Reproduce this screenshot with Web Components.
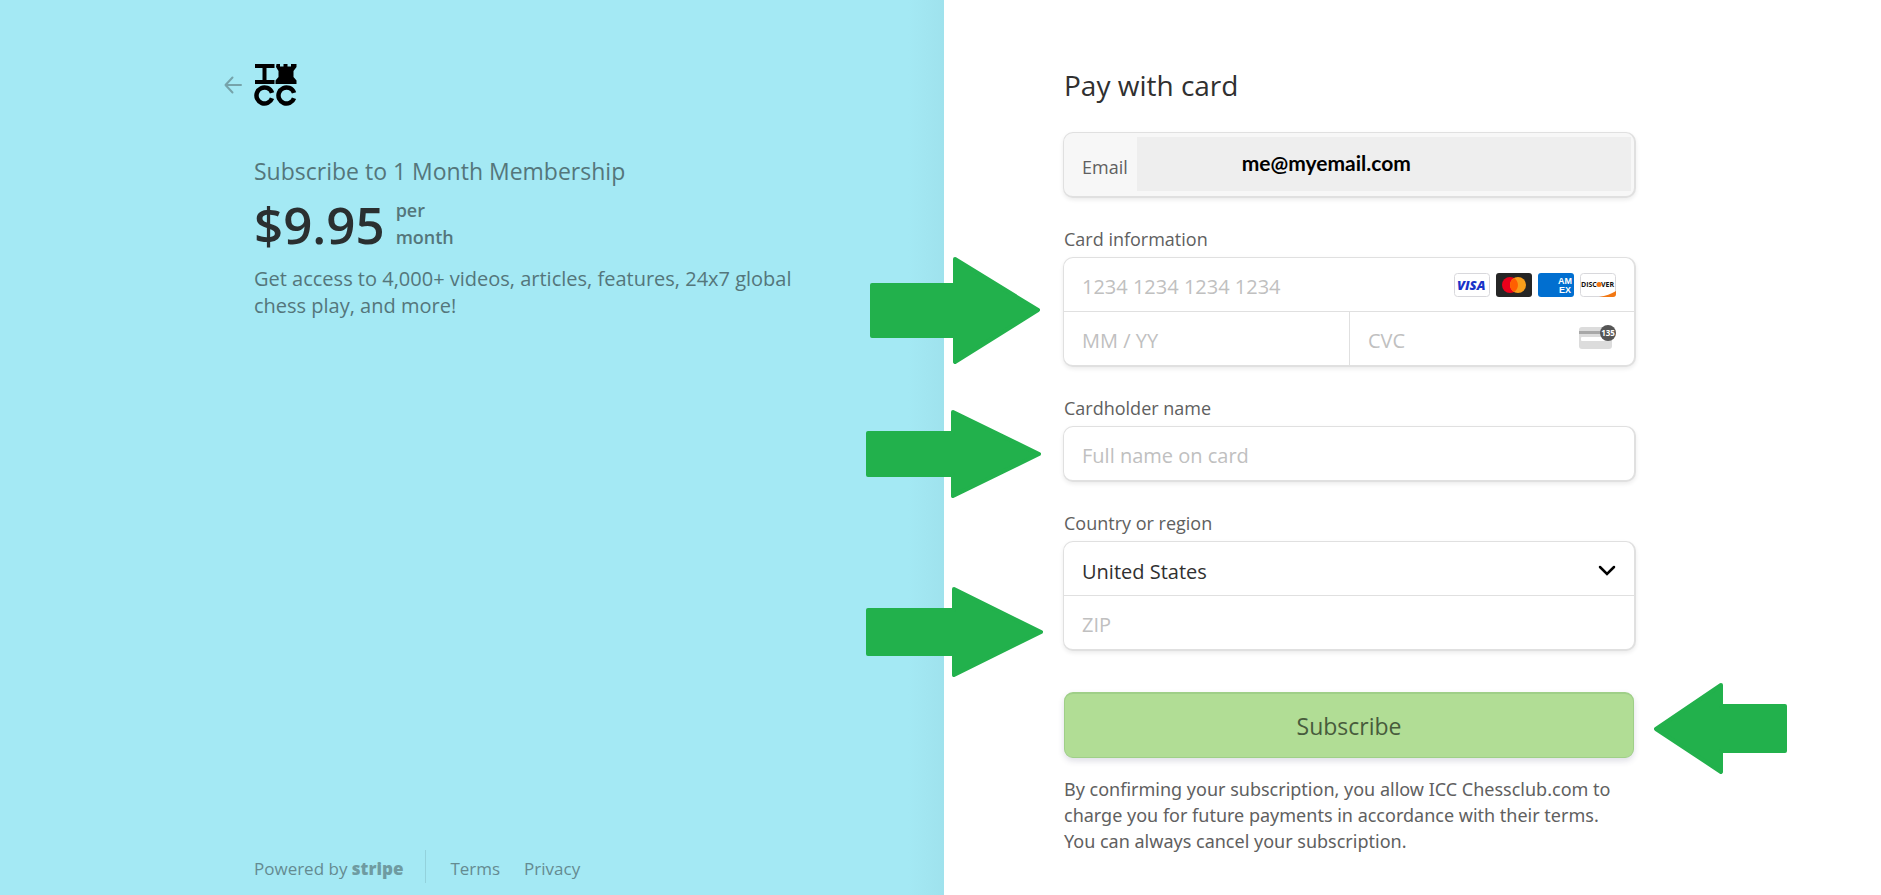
<!DOCTYPE html>
<html lang="en">
<head>
<meta charset="utf-8">
<title>Pay with card</title>
<style>
  html, body {
    margin: 0;
    height: 100%;
  }
  body {
    font-family: "Open Sans", "Noto Sans", sans-serif;
    color: #30313d;
    background: #fff;
  }
</style>
</head>
<body>
<checkout-page>
  <order-summary slot="summary" price="$9.95">
    <span slot="title">Subscribe to 1 Month Membership</span>
    <span slot="description">Get access to 4,000+ videos, articles, features, 24x7 global chess play, and more!</span>
  </order-summary>
  <payment-form slot="form"></payment-form>
</checkout-page>

<script>
const define = (name, html, setup) => {
  const tmpl = document.createElement('template');
  tmpl.innerHTML = html;
  customElements.define(name, class extends HTMLElement {
    constructor() {
      super();
      this.attachShadow({mode: 'open'}).appendChild(tmpl.content.cloneNode(true));
    }
    connectedCallback() {
      if (setup) setup(this, this.shadowRoot);
    }
  });
};

// shared by every group of form fields
const fieldStyles = `
  :host {
    display: block;
    position: relative;
    margin-top: 27px;
  }
  * { box-sizing: border-box; }
  .label {
    display: block;
    margin: 0 0 4px;
    font-size: 18px;
    line-height: 28px;
    color: #606060;
  }
  .box {
    margin: 0 -2px 0 -1px;
    border: 1px solid #e0e0e0;
    border-width: 1px 2px 2px 1px;
    border-radius: 10px;
    background: #fff;
    box-shadow: 0 2px 4px rgba(0, 0, 0, .08);
  }
  .row {
    display: flex;
    align-items: center;
    height: 53px;
    padding-right: 18px;
  }
  .line { border-top: 1px solid #e0e0e0; }
  .split { display: grid; grid-template-columns: 1fr 1fr; }
  .split .row + .row { border-left: 1px solid #e0e0e0; }
  input, select {
    flex: 1;
    min-width: 0;
    width: 100%;
    height: 100%;
    margin: 0;
    padding: 3px 0 0 18px;
    border: 0;
    outline: 0;
    background: transparent;
    font: inherit;
    font-size: 20px;
    color: #303030;
    -webkit-appearance: none;
    appearance: none;
  }
  input::placeholder { color: #c0c0c0; opacity: 1; }
`;

/**
 * Block arrow pointing at a field.
 *
 * size   "width height"
 * points the outline
 * side   which side of the field the arrow sits on (left, right)
 */
define('hint-arrow', `
  <style>
    :host {
      position: absolute;
      top: var(--top, 0);
      right: calc(100% + var(--gap, 24px));
    }
    :host([side="right"]) {
      right: auto;
      left: calc(100% + var(--gap, 24px));
    }
    svg { display: block; }
    polygon {
      fill: #22b14c;
      stroke: #22b14c;
      stroke-width: 4;
      stroke-linejoin: round;
    }
  </style>
  <svg aria-hidden="true"><polygon/></svg>
`, (el, root) => {
  const [w, h] = el.getAttribute('size').split(' ');
  const svg = root.querySelector('svg');
  svg.setAttribute('width', w);
  svg.setAttribute('height', h);
  root.querySelector('polygon').setAttribute('points', el.getAttribute('points'));
});

define('card-brands', `
  <style>
    :host { display: flex; gap: 6px; }
    svg { display: block; width: 36px; height: 24px; }
    text { font-family: "Open Sans", sans-serif; }
    .amex { font-family: "Liberation Sans", sans-serif; }
  </style>
  <svg viewBox="0 0 36 24" role="img" aria-label="Visa">
    <rect x=".5" y=".5" width="35" height="23" rx="3" fill="#fff" stroke="#d8d8dc"/>
    <text x="3" y="17" font-size="13" font-weight="800" font-style="italic" fill="#1a33c8">VISA</text>
  </svg>
  <svg viewBox="0 0 36 24" role="img" aria-label="Mastercard">
    <rect width="36" height="24" rx="3" fill="#252525"/>
    <circle cx="14" cy="12" r="8" fill="#eb001b"/>
    <circle cx="22" cy="12" r="8" fill="#f79e1b"/>
    <path d="M18 5.1a8 8 0 0 1 0 13.8a8 8 0 0 1 0-13.8z" fill="#ff5f00"/>
  </svg>
  <svg viewBox="0 0 36 24" role="img" aria-label="American Express">
    <rect width="36" height="24" rx="3" fill="#016fd0"/>
    <g font-size="9" font-weight="700" fill="#fff">
      <text class="amex" x="20" y="11">AM</text>
      <text class="amex" x="21" y="20">EX</text>
    </g>
  </svg>
  <svg viewBox="0 0 36 24" role="img" aria-label="Discover">
    <rect x=".5" y=".5" width="35" height="23" rx="3" fill="#fff" stroke="#d8d8dc"/>
    <path d="M19 24c7-1 12-3 17-6v3a3 3 0 0 1-3 3z" fill="#f27712"/>
    <g font-size="7" font-weight="700" fill="#111">
      <text x="1" y="14">DISC</text>
      <text x="21" y="14">VER</text>
    </g>
    <circle cx="19" cy="11.500" r="2.500" fill="#f27712"/>
  </svg>
`);

define('email-field', `
  <style>
    ${fieldStyles}
    :host { margin-top: 0; }
    .box {
      display: flex;
      gap: 9px;
      height: 66px;
      padding: 4px 3px 5px 18px;
      background: #f7f7f7;
    }
    label {
      align-self: center;
      padding-top: 5px;
      font-size: 18px;
      color: #606060;
    }
    input {
      padding: 0 0 4px 105px;
      background: #eee;
      font: 700 21px Lato, sans-serif;
      color: #000;
    }
  </style>
  <div class="box">
    <label for="email">Email</label>
    <input id="email" type="email" value="me@myemail.com" readonly>
  </div>
`);

define('card-field', `
  <style>
    ${fieldStyles}
    .cvc { display: block; flex: none; }
  </style>
  <label class="label" for="number">Card information</label>
  <div class="box">
    <div class="row">
      <input id="number" placeholder="1234 1234 1234 1234" inputmode="numeric">
      <card-brands></card-brands>
    </div>
    <div class="line split">
      <div class="row"><input aria-label="Expiration" placeholder="MM / YY"></div>
      <div class="row">
        <input aria-label="CVC" placeholder="CVC">
        <svg class="cvc" width="37" height="34" viewBox="0 0 37 34" aria-hidden="true">
          <rect y="5" width="33" height="22" rx="3" fill="#dcdcdc"/>
          <rect y="9" width="33" height="3" fill="#a8a8a8"/>
          <rect x="2" y="15" width="25" height="4" rx="1" fill="#fff"/>
          <circle cx="29" cy="11" r="8" fill="#555"/>
          <text x="29" y="14" text-anchor="middle" font-size="8" font-weight="700" fill="#fff">135</text>
        </svg>
      </div>
    </div>
  </div>
  <slot></slot>
`);

define('name-field', `
  <style>${fieldStyles}</style>
  <label class="label" for="name">Cardholder name</label>
  <div class="box">
    <div class="row"><input id="name" placeholder="Full name on card"></div>
  </div>
  <slot></slot>
`);

define('region-field', `
  <style>
    ${fieldStyles}
    .country { display: grid; align-items: center; }
    .country > * { grid-area: 1 / 1; }
    .country svg { justify-self: end; pointer-events: none; }
    select { padding-top: 5px; }
  </style>
  <label class="label" for="country">Country or region</label>
  <div class="box">
    <div class="row country">
      <select id="country"><option>United States</option></select>
      <svg width="18" height="14" viewBox="0 0 18 14" aria-hidden="true">
        <path d="M2 5l7 7 7-7" fill="none" stroke="#000" stroke-width="2.500" stroke-linecap="round"/>
      </svg>
    </div>
    <div class="line"><div class="row"><input aria-label="ZIP" placeholder="ZIP"></div></div>
  </div>
  <slot></slot>
`);

define('submit-button', `
  <style>
    :host {
      display: block;
      position: relative;
      margin-top: 41px;
    }
    button {
      display: block;
      width: 100%;
      height: 66px;
      padding: 0;
      border: 1px solid #9fcf88;
      border-top-width: 2px;
      border-radius: 9px;
      background: #b1dd95;
      box-shadow: 0 3px 6px rgba(50, 50, 93, .16);
      font: inherit;
      font-size: 23px;
      color: #475b3c;
    }
  </style>
  <button type="submit">Subscribe</button>
  <slot name="arrow"></slot>
`);

define('payment-form', `
  <style>
    :host { display: block; }
    h1 {
      margin: 0 0 26px;
      font-size: 28px;
      font-weight: 400;
      line-height: 42px;
      color: #303030;
    }
    p {
      margin: 18px 0 0;
      padding-right: 8px;
      font-family: "Noto Sans", sans-serif;
      font-size: 18px;
      line-height: 26px;
      color: #606060;
    }
  </style>
  <form>
    <h1>Pay with card</h1>
    <email-field></email-field>
    <card-field>
      <hint-arrow style="--top: 32px" size="170 107"
        points="2,28 85,28 85,2 168,53 85,105 85,79 2,79"></hint-arrow>
    </card-field>
    <name-field>
      <hint-arrow style="--top: 16px; --gap: 23px" size="175 88"
        points="2,23 87,23 87,2 173,44 87,86 87,65 2,65"></hint-arrow>
    </name-field>
    <region-field>
      <hint-arrow style="--top: 78px; --gap: 21px" size="177 90"
        points="2,23 88,23 88,2 175,45 88,88 88,67 2,67"></hint-arrow>
    </region-field>
    <submit-button>
      <hint-arrow slot="arrow" side="right" style="--top: -9px; --gap: 20px" size="133 91"
        points="131,23 67,23 67,2 2,46 67,89 67,68 131,68"></hint-arrow>
    </submit-button>
    <p>By confirming your subscription, you allow ICC Chessclub.com to charge you for future payments in accordance with their terms. You can always cancel your subscription.</p>
  </form>
`);

define('club-logo', `
  <style>
    :host { display: block; }
    svg { display: block; }
  </style>
  <svg width="43" height="42" viewBox="0 0 43 42" role="img" aria-label="ICC">
    <rect x="1" width="19.500" height="4"/>
    <rect x="1" y="16" width="19.500" height="4"/>
    <rect x="8.500" width="4" height="18"/>
    <path d="M22.500 0h3.500v2.500h3.500V0h4v2.500h3.500V0h5.500v3l-3 4v6l3 3.500V20h-21v-3.500l3-3.500V7l-2.500-4z"/>
    <g fill="none" stroke="#000" stroke-width="4.500" stroke-dasharray="44.500 60">
      <circle cx="10.500" cy="31.500" r="8" transform="rotate(20 10.500 31.500)"/>
      <circle cx="32.500" cy="31.500" r="8" transform="rotate(20 32.500 31.500)"/>
    </g>
  </svg>
`);

define('order-summary', `
  <style>
    :host {
      display: flex;
      flex-direction: column;
      flex: 1;
      color: #54767b;
    }
    header {
      display: flex;
      align-items: center;
      gap: 12px;
      margin-left: -30px;
      height: 42px;
    }
    a {
      color: inherit;
      text-decoration: none;
    }
    .back svg { display: block; }
    h2 {
      margin: 49px 0 10px;
      font-size: 23px;
      font-weight: 400;
      line-height: 32px;
    }
    .price {
      display: flex;
      gap: 11px;
      line-height: 54px;
      font-size: 51px;
      font-weight: 600;
      color: #2a2f30;
    }
    .period {
      width: min-content;
      font-size: 18px;
      line-height: 27px;
      color: #54767b;
    }
    p {
      margin: 14px 0 0;
      font-size: 20px;
      line-height: 27px;
    }
    footer {
      display: flex;
      align-items: center;
      gap: 24px;
      height: 33px;
      margin-top: auto;
      font-size: 17px;
      color: #648b91;
    }
    footer a {
      padding-top: 5px;
      line-height: 28px;
    }
    .powered {
      padding-right: 22px;
      border-right: 1px solid #93d2dc;
    }
    b {
      font-weight: 800;
      color: #6f9ba1;
    }
  </style>
  <header>
    <a class="back" href="#" aria-label="Back">
      <svg width="18" height="18" viewBox="0 0 18 18">
        <path d="M17 9H1.500M8.500 1.500L1.500 9l7 7.500" fill="none" stroke="#76a3aa" stroke-width="2" stroke-linecap="round" stroke-linejoin="round"/>
      </svg>
    </a>
    <club-logo></club-logo>
  </header>
  <h2><slot name="title"></slot></h2>
  <div class="price"><span id="price"></span><span class="period">per month</span></div>
  <p><slot name="description"></slot></p>
  <footer>
    <a class="powered" href="#">Powered by <b>stripe</b></a>
    <a href="#">Terms</a>
    <a href="#">Privacy</a>
  </footer>
`, (el, root) => {
  root.getElementById('price').textContent = el.getAttribute('price');
});

define('checkout-page', `
  <style>
    :host {
      display: grid;
      grid-template-columns: 944fr 937fr;
      min-height: 100vh;
    }
    section {
      display: flex;
      box-sizing: border-box;
      padding: 64px 120px 12px;
    }
    .summary {
      justify-content: flex-end;
      background: linear-gradient(to left, #9fe2ed, rgba(159, 226, 237, 0) 36px) #a4e9f4;
    }
    .summary > div, .form > div {
      display: flex;
      flex: 0 1 570px;
      min-width: 0;
    }
    .form > div { display: block; }
  </style>
  <section class="summary"><div><slot name="summary"></slot></div></section>
  <section class="form"><div><slot name="form"></slot></div></section>
`);
</script>
</body>
</html>
